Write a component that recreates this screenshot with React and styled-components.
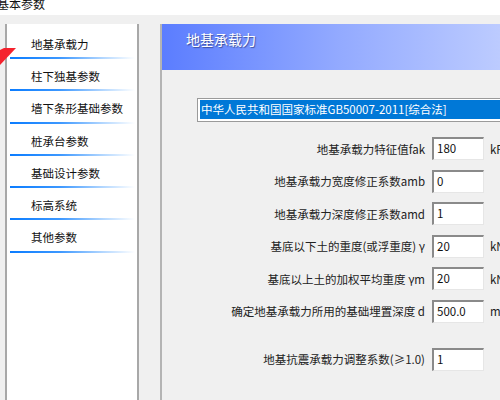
import { styled, createGlobalStyle } from 'styled-components';

const GlobalStyle = createGlobalStyle`
	html, body {
		margin: 0;
		padding: 0;
		background: #f0f0f0;
		overflow: hidden;
	}
	body {
		width: 500px;
		height: 400px;
		font-family: "Noto Sans CJK SC", "Noto Sans", sans-serif;
		color: #1a1a1a;
	}
`;

const menuItems = [
	'地基承载力',
	'柱下独基参数',
	'墙下条形基础参数',
	'桩承台参数',
	'基础设计参数',
	'标高系统',
	'其他参数',
];

const fields = [
	{ label: '地基承载力特征值fak', value: '180', unit: 'kPa' },
	{ label: '地基承载力宽度修正系数amb', value: '0' },
	{ label: '地基承载力深度修正系数amd', value: '1' },
	{ label: '基底以下土的重度(或浮重度) γ', value: '20', unit: 'kN/m³' },
	{ label: '基底以上土的加权平均重度 γm', value: '20', unit: 'kN/m³' },
	{ label: '确定地基承载力所用的基础埋置深度 d', value: '500.0', unit: 'mm' },
	{ label: '地基抗震承载力调整系数(≥1.0)', value: '1', spaced: true },
];

const App = () => {
	return (
		<>
			<GlobalStyle />
			<Window>
				<TitleBar>基本参数</TitleBar>
				<Body>
					<Menu>
						{menuItems.map((item) => (
							<MenuItem key={item}>{item}</MenuItem>
						))}
					</Menu>
					<Panel>
						<PanelHeader>地基承载力</PanelHeader>
						<PanelBody>
							<Select>
								<SelectValue>中华人民共和国国家标准GB50007-2011[综合法]</SelectValue>
							</Select>
							<Form>
								{fields.map((f) => (
									<Row key={f.label} $spaced={f.spaced}>
										<Label>{f.label}</Label>
										<Input>{f.value}</Input>
										<Unit>{f.unit}</Unit>
									</Row>
								))}
							</Form>
						</PanelBody>
					</Panel>
				</Body>
				<Pointer width="16" height="18" viewBox="0 0 16 18">
					<polygon points="0,2 4,0 16,0 0,17" fill="#f5222d" />
				</Pointer>
			</Window>
		</>
	);
};

const Window = styled.div`
	position: relative;
	width: 500px;
	height: 400px;
	overflow: hidden;
`;

const TitleBar = styled.div`
	height: 15px;
	background: #ffffff;
	font-size: 12px;
	line-height: 12px;
	margin-top: -2px;
	padding-top: 0;
	text-indent: -3px;
	color: #111;
	box-sizing: content-box;
	padding-bottom: 2px;
`;

const Body = styled.div`
	display: flex;
	align-items: stretch;
	gap: 21px;
	padding: 9px 0 0 5px;
	height: 400px;
`;

const Menu = styled.div`
	flex: 0 0 134px;
	box-sizing: border-box;
	background: #ffffff;
	border-left: 2px solid #a8a8a8;
	border-right: 2px solid #a8a8a8;
	padding-top: 2.7px;
`;

const MenuItem = styled.div`
	position: relative;
	height: 32.3px;
	box-sizing: border-box;
	padding: 10px 0 0 24px;
	font-size: 11.5px;
	line-height: 14px;
	color: #111;

	&::after {
		content: '';
		position: absolute;
		left: 3px;
		right: 2px;
		bottom: 0;
		height: 2px;
		background: linear-gradient(
			to right,
			#0a7cff 0%,
			#3d98ff 40%,
			#b5d8ff 75%,
			rgba(255, 255, 255, 0) 100%
		);
	}
`;

const Panel = styled.div`
	flex: 0 0 380px;
	box-sizing: border-box;
	border-left: 2px solid #b4b4b4;
	background: #f0f0f0;
`;

const PanelHeader = styled.div`
	height: 46px;
	box-sizing: border-box;
	padding: 4px 0 0 24px;
	font-size: 14px;
	line-height: 22px;
	color: #ffffff;
	text-shadow: 1px 1px 1px rgba(30, 40, 90, 0.6);
	background: linear-gradient(to right, #5b7dff 0%, #93aaff 45%, #cbd7ff 100%);
`;

const PanelBody = styled.div`
	padding-top: 28px;
`;

const Select = styled.div`
	margin-left: 35px;
	width: 360px;
	height: 24px;
	box-sizing: border-box;
	border: 1px solid #9a9a9a;
	border-right: none;
	background: #ffffff;
	padding: 1px 0 2px 2px;
`;

const SelectValue = styled.div`
	height: 19px;
	background: #0078d7;
	color: #ffffff;
	font-size: 11.5px;
	line-height: 19px;
	padding-left: 1px;
	white-space: nowrap;
`;

const Form = styled.div`
	display: flex;
	flex-direction: column;
	gap: 9.5px;
	margin-top: 15px;
`;

const Row = styled.div`
	display: grid;
	grid-template-columns: 263px 52px 60px;
	column-gap: 7px;
	align-items: center;
	height: 23px;
	margin-top: ${(p) => (p.$spaced ? '15.5px' : '0')};
`;

const Label = styled.div`
	text-align: right;
	font-size: 11.5px;
	color: #222;
	white-space: nowrap;
`;

const Input = styled.div`
	height: 23px;
	box-sizing: border-box;
	background: #ffffff;
	border-style: solid;
	border-width: 2px 1px 1px 2px;
	border-color: #8a8a8a #e6e6e6 #e6e6e6 #8a8a8a;
	font-size: 11.5px;
	line-height: 19px;
	padding-left: 3px;
	color: #111;
`;

const Unit = styled.div`
	font-size: 11.5px;
	color: #222;
	margin-left: -1px;
	white-space: nowrap;
`;

const Pointer = styled.svg`
	position: absolute;
	left: 0;
	top: 48px;
`;

export default App;
